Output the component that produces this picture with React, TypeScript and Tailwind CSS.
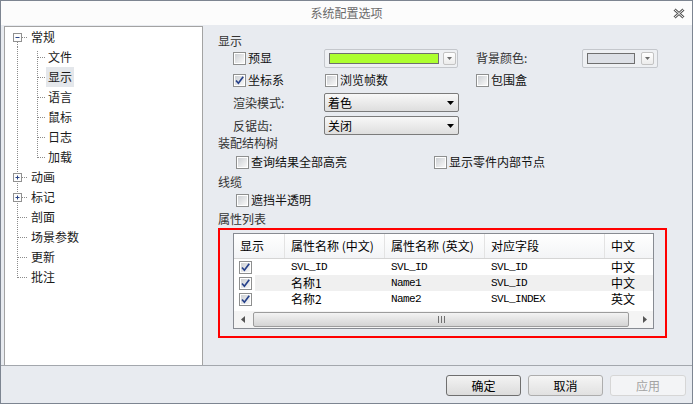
import React from "react";

type TreeItem = {
  label: string;
  level: 0 | 1;
  box?: "plus" | "minus";
  first?: boolean;
  last?: boolean;
  selected?: boolean;
};

const tree: TreeItem[] = [
  { label: "常规", level: 0, box: "minus", first: true },
  { label: "文件", level: 1, first: true },
  { label: "显示", level: 1, selected: true },
  { label: "语言", level: 1 },
  { label: "鼠标", level: 1 },
  { label: "日志", level: 1 },
  { label: "加载", level: 1, last: true },
  { label: "动画", level: 0, box: "plus" },
  { label: "标记", level: 0, box: "plus" },
  { label: "剖面", level: 0 },
  { label: "场景参数", level: 0 },
  { label: "更新", level: 0 },
  { label: "批注", level: 0, last: true },
];

const rows = [
  { cn: "SVL_ID", cnMono: true, en: "SVL_ID", field: "SVL_ID", lang: "中文" },
  { cn: "名称1", cnMono: false, en: "Name1", field: "SVL_ID", lang: "中文" },
  { cn: "名称2", cnMono: false, en: "Name2", field: "SVL_INDEX", lang: "英文" },
];

function TreeLines({ item }: { item: TreeItem }) {
  const w = item.level === 0 ? 24 : 41;
  const dot = { stroke: "#8c8c8c", strokeWidth: 1, strokeDasharray: "1 1" };
  let rootTop = 0;
  let rootBottom = 20;
  if (item.level === 0 && item.first) rootTop = 15;
  if (item.level === 0 && item.last) rootBottom = 11;
  return (
    <svg width={w} height="20" className="shrink-0">
      <line x1="12.5" y1={rootTop} x2="12.5" y2={rootBottom} {...dot} />
      {item.level === 0 && <line x1={item.box ? 17 : 13} y1="10.5" x2="22" y2="10.5" {...dot} />}
      {item.level === 1 && (
        <>
          <line x1="32.5" y1={item.first ? 4 : 0} x2="32.5" y2={item.last ? 11 : 20} {...dot} />
          <line x1="33" y1="10.5" x2="41" y2="10.5" {...dot} />
        </>
      )}
      {item.box && (
        <>
          <rect x="8.5" y="6.5" width="8" height="8" fill="#fdfdfd" stroke="#919191" />
          <line x1="10.5" y1="10.5" x2="14.5" y2="10.5" stroke="#2a4585" />
          {item.box === "plus" && <line x1="12.5" y1="8.5" x2="12.5" y2="12.5" stroke="#2a4585" />}
        </>
      )}
    </svg>
  );
}

function CheckBox({ checked = false }: { checked?: boolean }) {
  return (
    <svg width="13" height="13" viewBox="0 0 13 13" className="shrink-0">
      <defs>
        <linearGradient id="cbfill" x1="0" y1="0" x2="1" y2="1">
          <stop offset="0" stopColor="#cdd0d4" />
          <stop offset="1" stopColor="#f8f8f8" />
        </linearGradient>
      </defs>
      <rect x="0.5" y="0.5" width="12" height="12" fill="#fff" stroke="#8e8f8f" />
      <rect x="2" y="2" width="9" height="9" fill="url(#cbfill)" />
      {checked && (
        <path d="M3 6.5 L5.4 9.2 L10.2 2.8" fill="none" stroke="#26418a" strokeWidth="1.7" />
      )}
    </svg>
  );
}

function Check({ label, checked }: { label: string; checked?: boolean }) {
  return (
    <span className="flex items-center gap-[2px]">
      <CheckBox checked={checked} />
      <span className="text-[12px] leading-none text-[#111]">{label}</span>
    </span>
  );
}

function Select({ value }: { value: string }) {
  return (
    <div className="flex h-[19px] w-[135px] items-center justify-between rounded-[2px] border border-[#7b7b7b] bg-linear-to-b from-[#f8f8f8] to-[#dedede] pl-[3px] pr-[4px]">
      <span className="text-[12px] leading-none text-black">{value}</span>
      <svg width="7" height="4" viewBox="0 0 7 4">
        <path d="M0 0h7L3.5 4z" fill="#000" />
      </svg>
    </div>
  );
}

function DropBtn() {
  return (
    <span className="flex h-[13px] w-[13px] items-center justify-center rounded-[2px] border border-[#c3c3c3] bg-linear-to-b from-white to-[#ececec]">
      <svg width="5" height="3" viewBox="0 0 5 3">
        <path d="M0 0h5L2.5 3z" fill="#6b6b6b" />
      </svg>
    </span>
  );
}

function Tri({ dir }: { dir: "l" | "r" }) {
  return (
    <svg width="4" height="7" viewBox="0 0 4 7">
      <path d={dir === "l" ? "M4 0v7L0 3.5z" : "M0 0v7L4 3.5z"} fill="#555" />
    </svg>
  );
}

export default function App() {
  return (
    <div className="flex h-[404px] w-[693px] flex-col overflow-hidden border border-[#7d8591] bg-[#e8ebf0] font-['Noto_Sans_CJK_SC',sans-serif] text-[12px] text-[#222]">
      {/* title bar */}
      <div className="flex h-[24px] shrink-0 items-center bg-[#fcfcfc]">
        <div className="w-[40px]" />
        <div className="flex-1 text-center text-[12px] leading-none text-[#6a6a6a]">系统配置选项</div>
        <div className="flex w-[40px] justify-end pr-[7px]">
          <svg width="12" height="11" viewBox="0 0 12 11">
            <path d="M1.5 1.5L10.5 9.5M10.5 1.5L1.5 9.5" stroke="#555" strokeWidth="3" />
            <path d="M1.5 1.5L10.5 9.5M10.5 1.5L1.5 9.5" stroke="#fcfcfc" strokeWidth="1" />
          </svg>
        </div>
      </div>

      {/* body */}
      <div className="flex h-[340px] shrink-0">
        {/* tree */}
        <div className="ml-[3px] mt-[1px] flex w-[199px] flex-col border-x border-t border-[#a3a3a3] bg-white">
          {tree.map((item) => (
            <div key={item.label} className="flex h-[20px] items-center">
              <TreeLines item={item} />
              <span
                className={
                  item.selected
                    ? "flex h-[20px] items-center bg-[#e4e7eb] px-[2px] text-[12px] leading-none text-[#1a1a1a]"
                    : "flex h-[20px] items-center px-[2px] text-[12px] leading-none text-[#1a1a1a]"
                }
              >
                {item.label}
              </span>
            </div>
          ))}
        </div>

        {/* options */}
        <div className="flex flex-1 flex-col pl-[15px] pt-[8px]">
          <div className="flex h-[16px] items-center text-[#333]">显示</div>

          <div className="flex h-[18px] items-center">
            <div className="ml-[15px] w-[91px]">
              <Check label="预显" />
            </div>
            <div className="flex h-[19px] w-[134px] items-center rounded-[2px] border border-[#c4c7cc] bg-[#eef0f3] pl-[4px] pr-[1px]">
              <span className="h-[11px] w-[110px] border border-[#6f6f6f] bg-[#adff2f]" />
              <span className="ml-auto">
                <DropBtn />
              </span>
            </div>
            <div className="ml-[18px] w-[106px] text-[#333]">背景颜色:</div>
            <div className="flex h-[19px] w-[76px] items-center rounded-[2px] border border-[#c4c7cc] bg-[#eef0f3] pl-[4px] pr-[3px]">
              <span className="h-[11px] w-[48px] border border-[#6f6f6f] bg-[#dde0e6]" />
              <span className="ml-auto">
                <DropBtn />
              </span>
            </div>
          </div>

          <div className="flex h-[26px] items-center">
            <div className="ml-[15px] w-[92px]">
              <Check label="坐标系" checked />
            </div>
            <div className="w-[151px]">
              <Check label="浏览帧数" />
            </div>
            <Check label="包围盒" />
          </div>

          <div className="flex h-[23px] items-start">
            <div className="ml-[15px] flex h-[19px] w-[91px] items-center text-[#333]">渲染模式:</div>
            <Select value="着色" />
          </div>

          <div className="flex h-[20px] items-start">
            <div className="ml-[15px] flex h-[19px] w-[91px] items-center text-[#333]">反锯齿:</div>
            <Select value="关闭" />
          </div>

          <div className="flex h-[14px] items-center text-[#333]">装配结构树</div>

          <div className="flex h-[24px] items-center">
            <div className="ml-[18px] w-[198px]">
              <Check label="查询结果全部高亮" />
            </div>
            <Check label="显示零件内部节点" />
          </div>

          <div className="flex h-[16px] items-center text-[#333]">线缆</div>

          <div className="flex h-[20px] items-center">
            <div className="ml-[18px]">
              <Check label="遮挡半透明" />
            </div>
          </div>

          <div className="flex h-[18px] items-center text-[#333]">属性列表</div>

          {/* highlighted list */}
          <div className="h-[110px] w-[449px] border-2 border-[#ff0000] pl-[13px] pt-[3px]">
            <div className="flex h-[96px] w-[421px] flex-col border border-[#878b92] bg-white text-black">
              <div className="flex h-[25px] shrink-0 border-b border-[#d5d5d5] bg-linear-to-b from-white to-[#f3f4f6]">
                <div className="flex w-[51px] items-center border-r border-[#e3e3e3] pl-[6px]">显示</div>
                <div className="flex w-[100px] items-center whitespace-nowrap border-r border-[#e3e3e3] pl-[6px]">属性名称 (中文)</div>
                <div className="flex w-[100px] items-center whitespace-nowrap border-r border-[#e3e3e3] pl-[6px]">属性名称 (英文)</div>
                <div className="flex w-[120px] items-center border-r border-[#e3e3e3] pl-[6px]">对应字段</div>
                <div className="flex flex-1 items-center pl-[6px]">中文</div>
              </div>

              {rows.map((r, i) => (
                <div key={i} className="flex h-[16px] shrink-0 items-center">
                  <div className="flex h-full w-[21px] items-center pl-[5px]">
                    <CheckBox checked />
                  </div>
                  <div className={i === 1 ? "flex h-full flex-1 items-center bg-[#f0f0f0]" : "flex h-full flex-1 items-center"}>
                    <div className="w-[30px]" />
                    <div
                      className={
                        r.cnMono
                          ? "w-[100px] pl-[6px] font-['Liberation_Mono',monospace] text-[11px] tracking-[-0.6px]"
                          : "w-[100px] pl-[6px] leading-none"
                      }
                    >
                      {r.cn}
                    </div>
                    <div className="w-[100px] pl-[6px] font-['Liberation_Mono',monospace] text-[11px] tracking-[-0.6px]">{r.en}</div>
                    <div className="w-[120px] pl-[6px] font-['Liberation_Mono',monospace] text-[11px] tracking-[-0.6px]">{r.field}</div>
                    <div className="flex-1 pl-[6px] leading-none">{r.lang}</div>
                  </div>
                </div>
              ))}

              <div className="flex-1" />

              <div className="flex h-[17px] shrink-0 items-center bg-[#f4f4f4]">
                <div className="flex h-full w-[17px] items-center justify-center">
                  <Tri dir="l" />
                </div>
                <div className="ml-[2px] flex h-[15px] w-[376px] items-center justify-center rounded-[2px] border border-[#9c9c9c] bg-linear-to-b from-[#f3f3f3] to-[#d4d4d4]">
                  <svg width="7" height="7" viewBox="0 0 7 7">
                    <path d="M0.5 0v7M3.5 0v7M6.5 0v7" stroke="#707070" />
                  </svg>
                </div>
                <div className="flex-1" />
                <div className="flex h-full w-[17px] items-center justify-center">
                  <Tri dir="r" />
                </div>
              </div>
            </div>
          </div>
        </div>
      </div>

      {/* buttons */}
      <div className="flex flex-1 items-start justify-end gap-[7px] border-t border-[#a3a7ad] pr-[6px] pt-[9px]">
        <button className="flex h-[21px] w-[75px] items-center justify-center rounded-[3px] border border-[#6f6f6f] bg-linear-to-b from-[#f3f3f3] to-[#dcdcdc] text-[12px] leading-none text-black">
          确定
        </button>
        <button className="flex h-[21px] w-[75px] items-center justify-center rounded-[3px] border border-[#adadad] bg-linear-to-b from-[#f5f5f5] to-[#e1e1e1] text-[12px] leading-none text-black">
          取消
        </button>
        <button className="flex h-[21px] w-[76px] items-center justify-center rounded-[3px] border border-[#d6d6d6] bg-[#f3f4f6] text-[12px] leading-none text-[#a3a3a3]">
          应用
        </button>
      </div>
    </div>
  );
}
